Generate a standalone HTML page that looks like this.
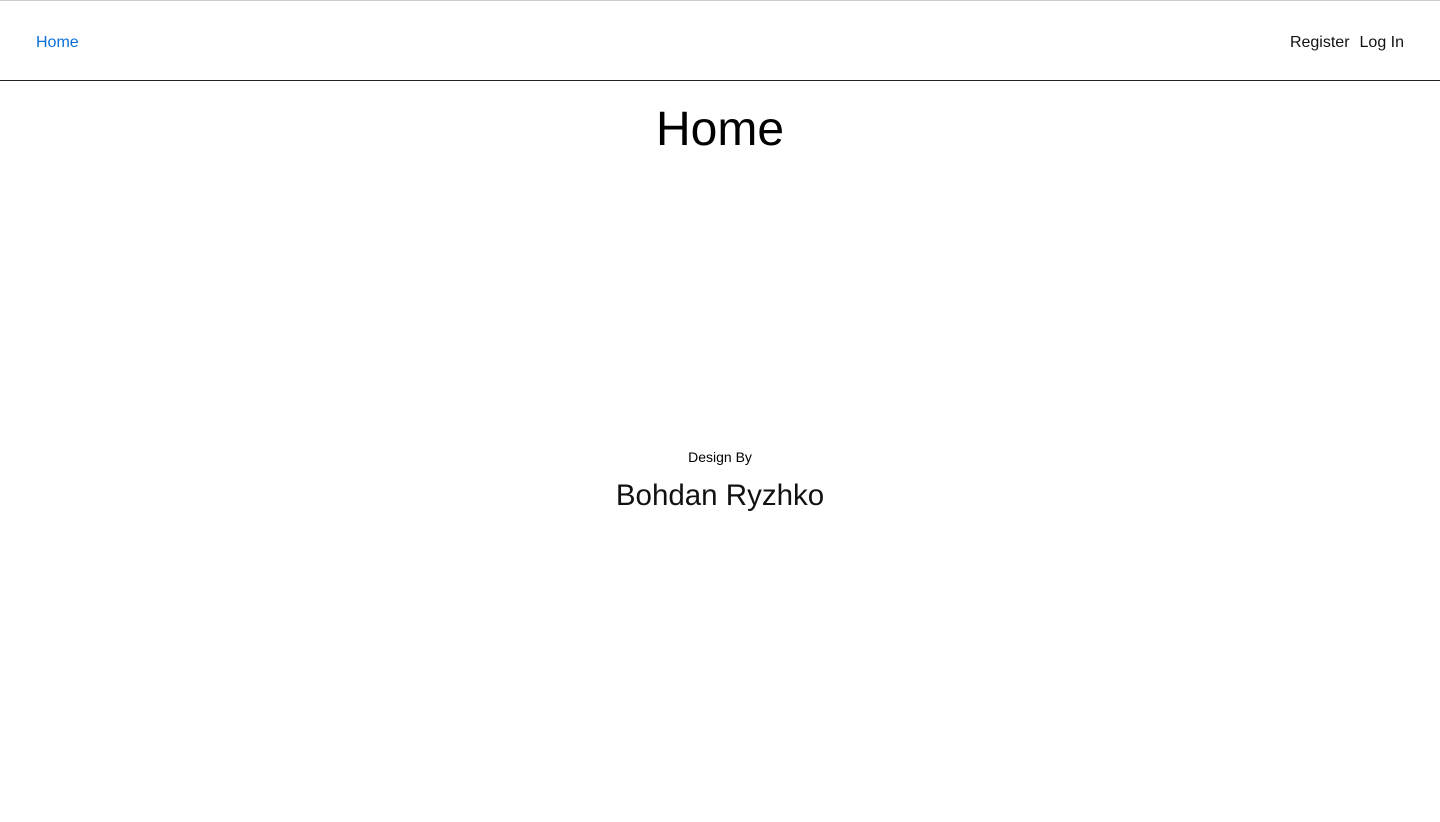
<!DOCTYPE html>
<html><head><meta charset="utf-8"><style>
*{margin:0;padding:0;box-sizing:border-box}
body{width:1440px;height:822px;background:#fff;font-family:"Liberation Sans",sans-serif;position:relative;overflow:hidden}
.top{position:absolute;top:0;left:0;width:1440px;height:1px;background:#ccc}
nav{position:absolute;top:1px;left:0;width:1440px;height:80px;border-bottom:1px solid #222}
.home{position:absolute;left:36px;top:33px;font-size:16px;color:#0a6fd6}
.right{position:absolute;right:36px;top:33px;font-size:16px;color:#111}
.right span{margin-left:10px}
h1{position:absolute;top:102px;width:100%;text-align:center;font-weight:normal;font-size:48px;color:#000}
.db{position:absolute;top:449px;width:100%;text-align:center;font-size:14px}
.name{position:absolute;top:479px;width:100%;text-align:center;font-size:29.5px;color:#111}
</style></head><body>
<div class="top"></div>
<nav><div class="home">Home</div><div class="right"><span>Register</span><span>Log In</span></div></nav>
<h1>Home</h1>
<div class="db">Design By</div>
<div class="name">Bohdan Ryzhko</div>
</body></html>
